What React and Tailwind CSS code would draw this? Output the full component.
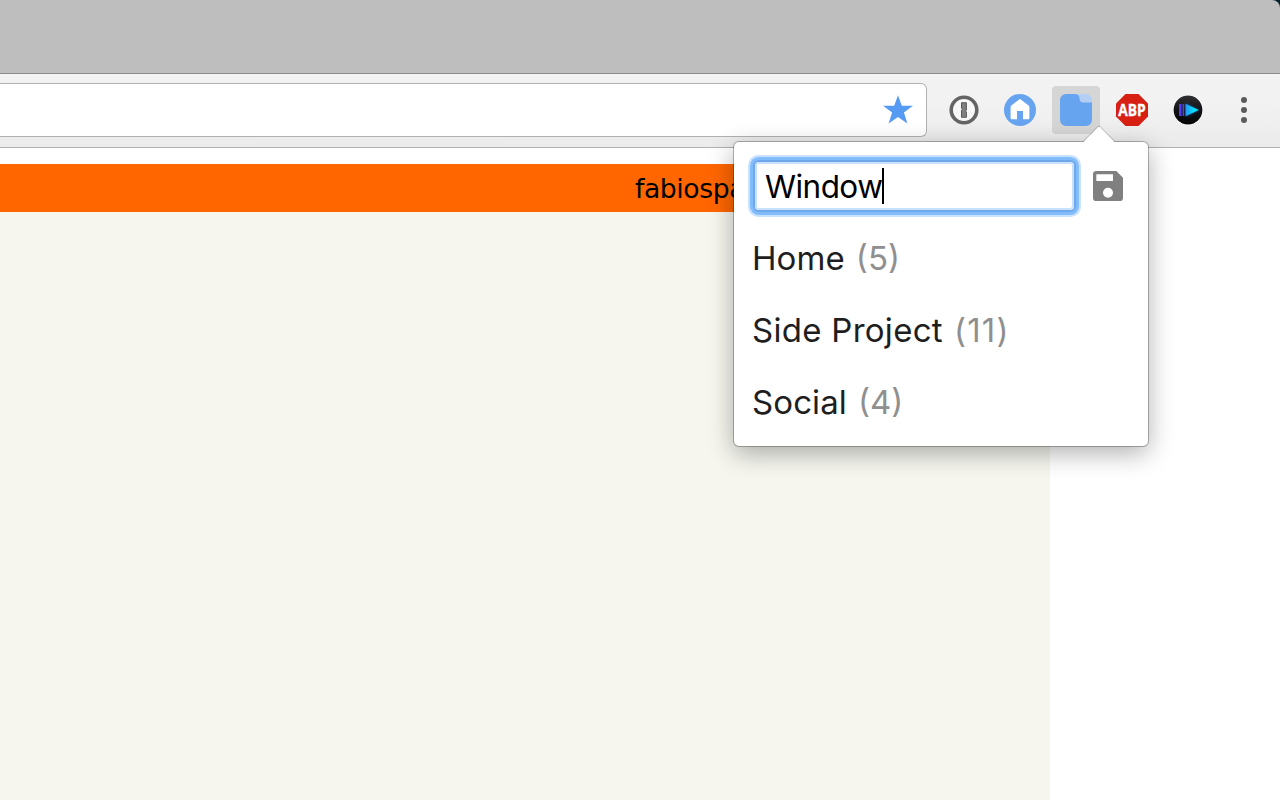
import React from "react";

const groups = [
  { name: "Home", count: 5, spacing: "tracking-[0.1px]", countSpacing: "" },
  { name: "Side Project", count: 11, spacing: "tracking-[0.28px]", countSpacing: "tracking-[1.2px]" },
  { name: "Social", count: 4, spacing: "tracking-[0.1px]", countSpacing: "" },
];

function StarIcon() {
  return (
    <svg className="h-8 w-8" viewBox="0 0 32 32">
      <path fill="#559bf3" d="M16 1.2l3.800 10.500h11.200l-9.100 6.900 3.500 10.900L16 23l-9.400 6.500 3.500-10.900L1 11.700h11.200z" />
    </svg>
  );
}

function KeyholeIcon() {
  return (
    <svg className="h-8 w-8" viewBox="0 0 32 32">
      <circle cx="16" cy="16" r="12.8" fill="#f7f7f7" stroke="#646464" strokeWidth="3.6" />
      <path fill="#808080" stroke="#5a5a5a" strokeWidth="1" d="M13.500 8.700h4.900v7.300l-1 1 1 1v5.300h-4.900v-7.100l1-1-1-1z" />
    </svg>
  );
}

function HomeIcon() {
  return (
    <svg className="h-8 w-8" viewBox="0 0 32 32">
      <circle cx="16" cy="16" r="16" fill="#67a4f0" />
      <path fill="#fff" d="M15.200 5.400q.8-.6 1.600 0l7.800 6.100q.8.700.8 1.800V24q0 1.300-1.300 1.300H19V17h-6v8.300H7.900q-1.300 0-1.300-1.300V13.300q0-1.100.8-1.800z" />
    </svg>
  );
}

function TabIcon() {
  return (
    <svg className="h-8 w-8" viewBox="0 0 32 32">
      <path fill="#b4cff3" d="M14 0h12a6 6 0 0 1 6 6v4H18z" />
      <path fill="#67a4f0" d="M6 0h8.500q5 0 5 4.500 0 4 4 4H32V26a6 6 0 0 1-6 6H6a6 6 0 0 1-6-6V6a6 6 0 0 1 6-6z" />
    </svg>
  );
}

function AbpIcon() {
  return (
    <svg className="h-8 w-8" viewBox="0 0 32 32">
      <path fill="#d72013" d="M9.500 0h13L32 9.500v13L22.500 32h-13L0 22.500v-13z" />
      <text x="2.300" y="22.200" textLength="27.500" lengthAdjust="spacingAndGlyphs" fill="#fff" stroke="#fff" strokeWidth=".35" className="font-['Open_Sans',sans-serif] text-[16.5px] font-bold">ABP</text>
    </svg>
  );
}

function PlayIcon() {
  return (
    <svg className="h-8 w-8" viewBox="0 0 32 32">
      <defs>
        <linearGradient id="disc" x1="0" y1="0" x2="0" y2="1">
          <stop offset="0" stopColor="#303033" />
          <stop offset=".5" stopColor="#131316" />
          <stop offset="1" stopColor="#050505" />
        </linearGradient>
        <linearGradient id="arrow">
          <stop offset="0" stopColor="#2496f6" />
          <stop offset=".6" stopColor="#08dcfa" />
          <stop offset="1" stopColor="#00e8f8" />
        </linearGradient>
        <filter id="glow" x="-50%" y="-50%" width="200%" height="200%">
          <feGaussianBlur stdDeviation="1.3" />
        </filter>
      </defs>
      <circle cx="16" cy="16" r="15.200" fill="#fff" />
      <circle cx="16" cy="16" r="14.400" fill="url(#disc)" />
      <path fill="#1673c8" d="M14 9.500l13.500 6.500L14 22.500z" opacity=".7" filter="url(#glow)" />
      <path fill="#503df2" d="M7 10h2.600v12H7z" />
      <path fill="#4048e8" d="M10.600 10h1.600v12h-1.600z" />
      <path fill="url(#arrow)" d="M13.500 9.700l13.200 6.300-13.200 6.300z" />
    </svg>
  );
}

function SaveIcon() {
  return (
    <svg className="h-[30px] w-[30px]" viewBox="3 3 18 18">
      <path fill="#808080" d="M17 3H5a2 2 0 0 0-2 2v14a2 2 0 0 0 2 2h14a2 2 0 0 0 2-2V7zm-5 16a3 3 0 1 1 0-6 3 3 0 0 1 0 6zm3-10H5V5h10z" />
    </svg>
  );
}

function Toolbar() {
  return (
    <div className="flex h-[74px] shrink-0 items-start border-b border-[#b0b0b0] bg-linear-to-b from-[#f2f2f2] from-40% to-[#ebebeb] pt-[9px]">
      <div className="flex h-[54px] w-[927px] items-center justify-end rounded-r-[6px] border border-l-0 border-[#b1b1b1] bg-white pr-3">
        <StarIcon />
      </div>
      <div className="ml-[13px] mt-[3px] flex">
        <span className="flex h-12 w-12 items-center justify-center"><KeyholeIcon /></span>
        <span className="ml-2 flex h-12 w-12 items-center justify-center"><HomeIcon /></span>
        <span className="ml-2 flex h-12 w-12 items-center justify-center rounded-[4px] bg-[#d5d5d5]"><TabIcon /></span>
        <span className="ml-2 flex h-12 w-12 items-center justify-center"><AbpIcon /></span>
        <span className="ml-2 flex h-12 w-12 items-center justify-center"><PlayIcon /></span>
        <span className="ml-2 flex h-12 w-12 flex-col items-center justify-center gap-1">
          <i className="h-1.5 w-1.5 rounded-full bg-[#5b5b5b]" />
          <i className="h-1.5 w-1.5 rounded-full bg-[#5b5b5b]" />
          <i className="h-1.5 w-1.5 rounded-full bg-[#5b5b5b]" />
        </span>
      </div>
    </div>
  );
}

function Popup() {
  return (
    <div className="absolute left-[734px] top-[142px] h-[304px] w-[414px] rounded-[5px] bg-white font-['Inter',sans-serif] shadow-[0_0_0_1px_rgba(0,0,0,0.27),0_7px_26px_rgba(0,0,0,0.32)]">
      <svg className="absolute left-[349px] top-[-17px] h-[18px] w-8" viewBox="0 0 32 18">
        <path d="M0 17.500L15 2q1-1 2 0l15 15.500V18H0z" fill="#fff" />
        <path d="M0 16.700L15 1.500q1-1 2 0l15 15.200" fill="none" stroke="#000" strokeOpacity=".23" />
      </svg>
      <div className="flex items-center pl-[21px] pt-5">
        <div className="flex h-12 w-[319px] items-center rounded-[4px] bg-white pl-[10px] shadow-[inset_0_0_0_2px_#c8e1fd,0_0_0_2px_#6ea8ea,0_0_0_5px_#83bcfc,0_0_0_7px_#c9e2ff]">
          <span className="translate-y-px text-[31.500px] leading-[38px] tracking-[-0.55px] text-black">Window</span>
          <span className="h-9 w-0.5 bg-black" />
        </div>
        <span className="-mt-px ml-[19px]"><SaveIcon /></span>
      </div>
      <ul className="mt-[13px] pl-[18px] text-[33px] text-[#1e1e1e]">
        {groups.map((g) => (
          <li key={g.name} className="flex h-[72px] items-center gap-[11px] whitespace-nowrap">
            <span className={g.spacing}>{g.name}</span>
            <span className={`text-[#8f8f8f] ${g.countSpacing}`}>({g.count})</span>
          </li>
        ))}
      </ul>
    </div>
  );
}

export default function App() {
  return (
    <div className="relative flex h-[800px] w-[1280px] flex-col overflow-hidden bg-white">
      <div className="h-[73px] shrink-0 bg-[#02202e]">
        <div className="h-full rounded-tr-[8px] bg-[#bebebe]" />
      </div>
      <div className="h-px shrink-0 bg-[#8a8a8a]" />
      <Toolbar />
      <main className="flex flex-1 flex-col pt-4">
        <div className="flex h-12 w-[1050px] items-center bg-[#ff6600] pl-[635px] pt-0.5">
          <span className="font-['DejaVu_Sans',sans-serif] text-[26.600px] tracking-[-0.4px] text-black">fabiospace</span>
        </div>
        <div className="w-[1050px] flex-1 bg-[#f6f6ef]" />
      </main>
      <Popup />
    </div>
  );
}
